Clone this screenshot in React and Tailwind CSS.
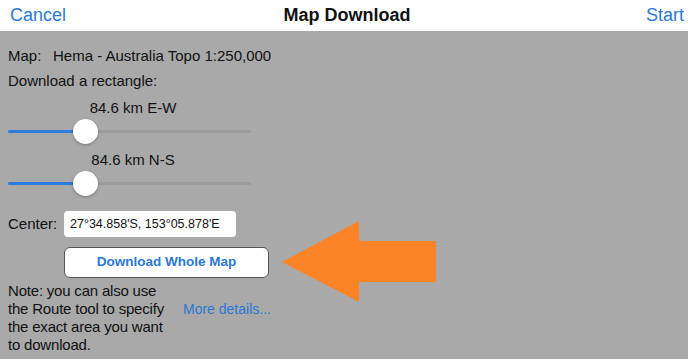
import React from "react";

function Slider({ label }) {
  return (
    <div className="flex flex-col">
      <div className="w-[250px] text-center text-[15px] leading-[20px] text-[#111]">{label}</div>
      <div className="relative h-[26px] w-[243px]">
        <div className="absolute left-0 top-[12px] h-[3px] w-[80px] rounded-full bg-[#2b7be0]" />
        <div className="absolute left-[80px] right-0 top-[12px] h-[3px] rounded-full bg-[#9c9c9c]" />
        <div className="absolute left-[65px] top-[1px] h-[25px] w-[25px] rounded-full bg-white shadow-[0_1px_3px_rgba(0,0,0,0.3)]" />
      </div>
    </div>
  );
}

export default function App() {
  return (
    <div className="relative h-[359px] w-[688px] overflow-hidden bg-[#a9a9a9] font-['Liberation_Sans',Arial,sans-serif]">
      <div className="grid h-[31px] grid-cols-3 items-center bg-white pl-[10px] pr-[4px]">
        <span className="text-[18px] text-[#2a78d6]">Cancel</span>
        <span className="text-center text-[18px] font-bold text-[#111]">Map Download</span>
        <span className="text-right text-[18px] text-[#2a78d6]">Start</span>
      </div>
      <div className="flex flex-col pl-[8px] pt-[13px] text-[15px] text-[#111]">
        <div className="flex leading-[24px]">
          <span className="w-[45px]">Map:</span>
          <span>Hema - Australia Topo 1:250,000</span>
        </div>
        <div className="mt-[1px] leading-[24px]">Download a rectangle:</div>
        <div className="mt-[5px]">
          <Slider label="84.6 km E-W" />
        </div>
        <div className="mt-[6px]">
          <Slider label="84.6 km N-S" />
        </div>
        <div className="mt-[15px] flex items-center">
          <span className="w-[56px]">Center:</span>
          <div className="flex h-[26px] w-[172px] items-center rounded-[4px] bg-white px-[6px] text-[12.5px]">
            27°34.858'S, 153°05.878'E
          </div>
        </div>
        <div className="ml-[56px] mt-[10px] flex h-[31px] w-[205px] items-center justify-center rounded-[6px] border border-[#555] bg-white text-[13.5px] font-bold text-[#2a78d6]">
          Download Whole Map
        </div>
        <div className="mt-[4px] flex items-start">
          <div className="flex w-[175px] flex-col whitespace-nowrap text-[15px] leading-[18px] tracking-[-0.2px]">
            <span>Note: you can also use</span>
            <span>the Route tool to specify</span>
            <span>the exact area you want</span>
            <span>to download.</span>
          </div>
          <span className="mt-[18px] text-[14px] leading-[18px] text-[#2a78d6]">More details...</span>
        </div>
      </div>
      <svg className="absolute left-0 top-0" width="688" height="359">
        <polygon points="282,262 359,221 359,241 436,241 436,282 359,282 359,302" fill="#fd8327" />
      </svg>
    </div>
  );
}
